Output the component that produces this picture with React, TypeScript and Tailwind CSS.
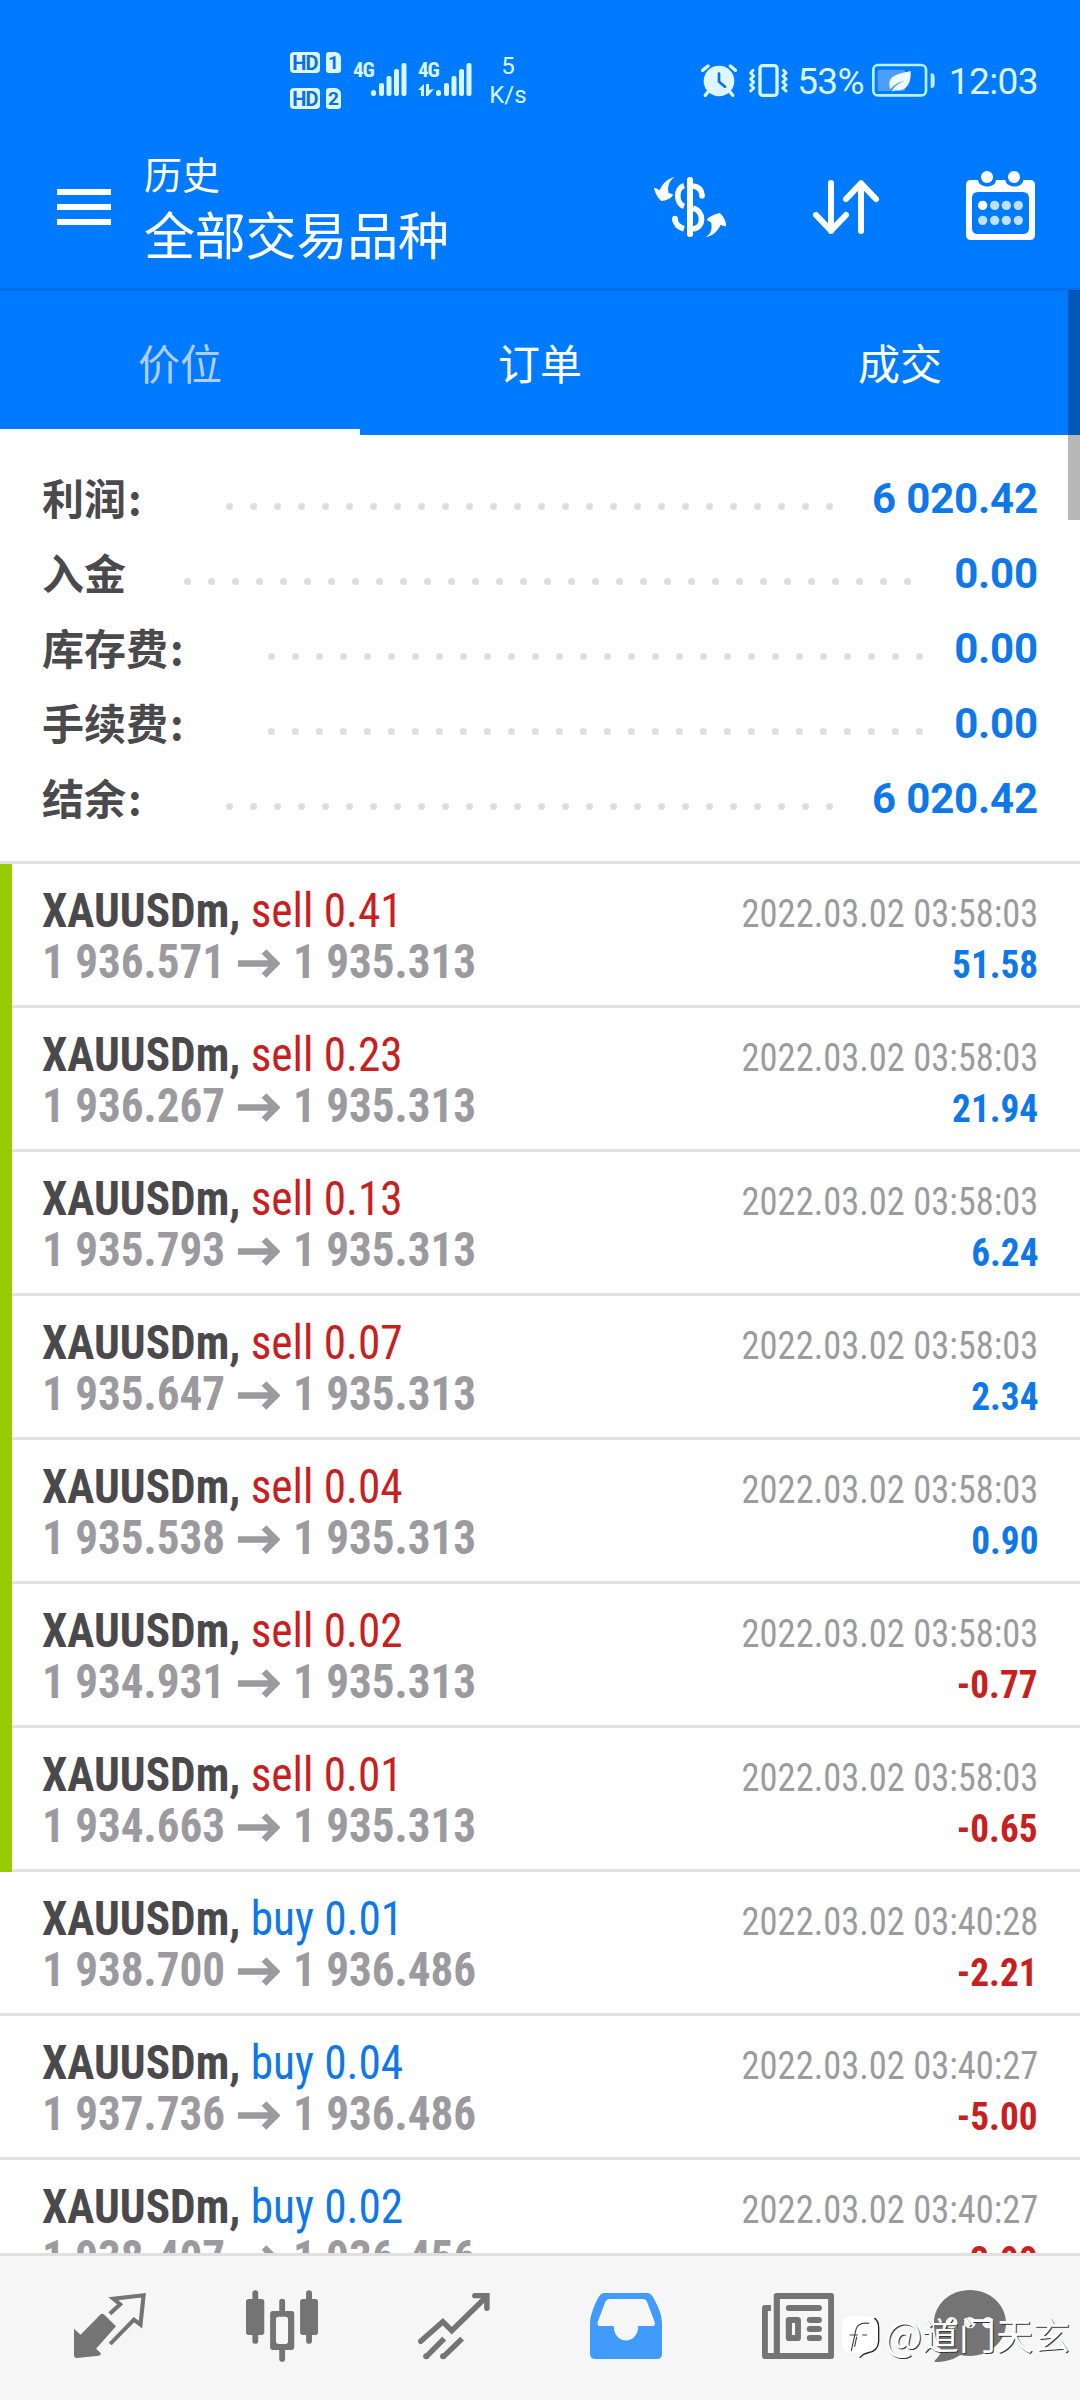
import type { ReactNode } from 'react';
import clsx from 'clsx';

const summary = [
  { label: '利润', colon: true, value: '6 020.42', dots: 26 },
  { label: '入金', colon: false, value: '0.00', dots: 31 },
  { label: '库存费', colon: true, value: '0.00', dots: 28 },
  { label: '手续费', colon: true, value: '0.00', dots: 28 },
  { label: '结余', colon: true, value: '6 020.42', dots: 26 },
];

const deals = [
  { side: 'sell', volume: '0.41', open: '1 936.571', close: '1 935.313', time: '2022.03.02 03:58:03', profit: '51.58', today: true },
  { side: 'sell', volume: '0.23', open: '1 936.267', close: '1 935.313', time: '2022.03.02 03:58:03', profit: '21.94', today: true },
  { side: 'sell', volume: '0.13', open: '1 935.793', close: '1 935.313', time: '2022.03.02 03:58:03', profit: '6.24', today: true },
  { side: 'sell', volume: '0.07', open: '1 935.647', close: '1 935.313', time: '2022.03.02 03:58:03', profit: '2.34', today: true },
  { side: 'sell', volume: '0.04', open: '1 935.538', close: '1 935.313', time: '2022.03.02 03:58:03', profit: '0.90', today: true },
  { side: 'sell', volume: '0.02', open: '1 934.931', close: '1 935.313', time: '2022.03.02 03:58:03', profit: '-0.77', today: true },
  { side: 'sell', volume: '0.01', open: '1 934.663', close: '1 935.313', time: '2022.03.02 03:58:03', profit: '-0.65', today: true },
  { side: 'buy', volume: '0.01', open: '1 938.700', close: '1 936.486', time: '2022.03.02 03:40:28', profit: '-2.21', today: false },
  { side: 'buy', volume: '0.04', open: '1 937.736', close: '1 936.486', time: '2022.03.02 03:40:27', profit: '-5.00', today: false },
  { side: 'buy', volume: '0.02', open: '1 938.407', close: '1 936.456', time: '2022.03.02 03:40:27', profit: '-3.90', today: false },
];

function HdBadge({ sim }: { sim: string }) {
  return (
    <div className="flex gap-[6px] h-[21px] font-bold text-[#0a6fe0] leading-[22px]">
      <span className="w-[30px] rounded-[4px] bg-[#def6ff] text-center text-[20px] tracking-[-0.8px]">HD</span>
      <span className="w-[15px] rounded-[3px] rounded-tr-[6px] bg-[#def6ff] text-center text-[19px]">{sim}</span>
    </div>
  );
}

function Signal({ data }: { data?: boolean }) {
  return (
    <div className="flex h-[36px] font-stretch-condensed">
      <span className="w-[18px] -mt-[5px] text-[21px] leading-[26px] font-bold tracking-[-1px]">4G</span>
      <svg className="w-[54px] h-[36px] -ml-[18px]" viewBox="0 0 54 36" fill="#d8f6ff">
        <rect x="18" y="28" width="5" height="6" rx="2.5" />
        <rect x="26" y="21" width="5" height="13" rx="2" />
        <rect x="33.500" y="14" width="5" height="20" rx="2" />
        <rect x="41" y="7" width="5" height="27" rx="2" />
        <rect x="48.500" y="1" width="5" height="33" rx="2" />
        {data && <path d="M0 28l6-6v12H3v-6H0zM8 22h3v6l5-1-6 7H8z" />}
      </svg>
    </div>
  );
}

function StatusBar() {
  return (
    <div className="flex items-center h-[144px] pt-[16px] pl-[290px] pr-[42px] text-[#d8f6ff]">
      <div className="flex flex-col gap-[15px]">
        <HdBadge sim="1" />
        <HdBadge sim="2" />
      </div>
      <div className="flex gap-[11px] ml-[12px]">
        <Signal />
        <Signal data />
      </div>
      <div className="w-[40px] ml-[16px] pt-[2px] text-center text-[24px] leading-[29px]">
        <div>5</div>
        <div>K/s</div>
      </div>
      <div className="flex items-center ml-auto text-[37px] leading-[40px]">
        <svg className="w-[37px] h-[34px]" viewBox="65 66 111 102" fill="#def6ff">
          <circle cx="119" cy="120" r="46" />
          <path d="M70 88l16-13M153 75l15 13M88 150l-10 13M150 150l10 13" stroke="#def6ff" strokeWidth="10" strokeLinecap="round" />
          <path d="M119 98v24l18 15" fill="none" stroke="#0a6fe0" strokeWidth="8" strokeLinecap="round" />
        </svg>
        <svg className="w-[41px] h-[34px] ml-[10px]" viewBox="205 66 123 102" fill="none" stroke="#d8f6ff" strokeLinecap="round" strokeLinejoin="round">
          <rect x="241" y="74" width="51" height="89" rx="8" strokeWidth="10" />
          <path d="M220 88l-7 8 9 9-9 9 9 9-9 9 9 9-9 9M312 88l7 8-9 9 9 9-9 9 9 9-9 9 9 9" strokeWidth="9" />
        </svg>
        <span className="ml-[8px] pt-[4px] tracking-[-0.7px]">53%</span>
        <svg className="w-[63px] h-[34px] ml-[8px]" viewBox="576 70 189 102">
          <rect x="580" y="76" width="158" height="91" rx="14" fill="none" stroke="#b8f2ff" strokeWidth="8" />
          <rect x="593" y="90" width="82" height="64" rx="4" fill="#4d9fff" />
          <path d="M752 101q12-3 12 12v20q0 13-12 12z" fill="#b8f2ff" />
          <path d="M692 94c2 34-10 62-46 58l-10 4q6-20 38-33-28 6-43 25c-14-42 28-46 61-54z" fill="#f0fbff" />
        </svg>
        <span className="ml-[14px] pt-[4px] tracking-[-0.6px]">12:03</span>
      </div>
    </div>
  );
}

function Header() {
  return (
    <div className="flex h-[147px] border-b-[3px] border-[#006ee6]">
      <div className="flex flex-col gap-[9px] w-[54px] ml-[57px] mt-[45px]">
        <span className="h-[6px] bg-white" />
        <span className="h-[6px] bg-white" />
        <span className="h-[6px] bg-white" />
      </div>
      <div className="ml-[33px] mt-[4px]">
        <div className="text-[38px] leading-[56px]">历史</div>
        <div className="text-[51px] leading-[67px] tracking-[-0.2px]">全部交易品种</div>
      </div>
      <div className="flex gap-[84px] ml-auto mt-[27px] pr-[42px]">
        <svg className="w-[72px] h-[72px]" viewBox="162 93 216 216" fill="white">
          <rect x="261" y="111" width="18" height="180" rx="8" />
          <path d="M252 137c-26 8-24 54 0 62M279 138c18 2 26 14 27 28M279 205c34 8 34 58 0 62M224 236c2 16 12 26 28 30" fill="none" stroke="white" strokeWidth="17" />
          <circle cx="306" cy="167" r="8.500" />
          <circle cx="225" cy="236" r="8.500" />
          <path d="M225 111c-16 8-24 28-19 48l12 4c2 6-6 10-12 14q-12 6-22 6-16-13-22-38c4-3 10 2 17 6 8-20 24-36 46-40z" />
          <path d="M317 291c14-6 21-22 16-44l-12-6c1-8 16-16 38-22 12 10 18 24 20 38-4 4-12-1-17-3-8 18-22 33-45 37z" />
        </svg>
        <svg className="w-[72px] h-[72px]" viewBox="630 93 216 216" fill="none" stroke="white" strokeWidth="18" strokeLinecap="round" strokeLinejoin="round">
          <path d="M693 129v144M648 225l45 47 45-47M783 273V130M738 177l45-47 45 47" />
        </svg>
        <svg className="w-[72px] h-[72px]" viewBox="1098 93 216 216" fill="white">
          <path fillRule="evenodd" d="M1112 120h22c2 26 54 26 54 0h28c2 26 52 26 54 0h20q15 0 15 15v150q0 15-15 15h-177q-15 0-15-15V135q0-15 14-15zm22 36q-18 0-18 18v90q0 18 18 18h134q19 0 19-18v-90q0-18-19-18z" />
          <circle cx="1161" cy="111" r="18" />
          <circle cx="1242" cy="111" r="18" />
          <circle cx="1148" cy="196" r="14" />
          <g fill="#bfe0ff">
            <circle cx="1184" cy="196" r="14" />
            <circle cx="1219" cy="196" r="14" />
            <circle cx="1255" cy="196" r="14" />
            <circle cx="1148" cy="241" r="14" />
            <circle cx="1184" cy="241" r="14" />
            <circle cx="1219" cy="241" r="14" />
            <circle cx="1255" cy="241" r="14" />
          </g>
        </svg>
      </div>
    </div>
  );
}

function Tabs() {
  return (
    <div className="grid grid-cols-3 h-[144px] text-center text-[42px] leading-[149px]">
      <div className="h-[144px] border-b-[6px] border-white text-[#b0cdf2]">价位</div>
      <div>订单</div>
      <div>成交</div>
    </div>
  );
}

function Summary() {
  return (
    <div className="pt-[26px] pb-[25px] px-[42px] border-b-[3px] border-[#e2e2e2]">
      {summary.map(row => (
        <div key={row.label} className="flex h-[75px] leading-[75px] text-[42px]">
          <div className="flex -mt-[2px] font-['Noto_Sans_CJK_SC',sans-serif] font-bold text-[#4a4a4d]">
            {row.label}
            {row.colon && <span className="w-[42px] pl-[2px]">:</span>}
          </div>
          <div className="flex gap-[17px] ml-[58px] pt-[42px]">
            {Array.from({ length: row.dots }, (_, i) => (
              <span key={i} className="size-[7px] rounded-full bg-[#dedede]" />
            ))}
          </div>
          <span className="ml-auto font-bold tracking-[-0.15px] text-[#0f78e8]">{row.value}</span>
        </div>
      ))}
    </div>
  );
}

function Deal({ deal }: { deal: (typeof deals)[number] }) {
  return (
    <div className="flex h-[144px] font-stretch-condensed">
      {deal.today && <div className="w-[12px] bg-[#99cc00]" />}
      <div
        className={clsx(
          'flex-1 pt-[21px] pr-[42px] border-b-[3px] border-[#e2e2e2] text-[48px] leading-[51px]',
          deal.today ? 'pl-[30px]' : 'pl-[42px]'
        )}
      >
        <div className="flex justify-between items-baseline h-[51px]">
          <div className="origin-left scale-x-[0.943]">
            <span className="font-bold text-[#4a4a4d]">XAUUSDm, </span>
            <span className={deal.side === 'sell' ? 'text-[#c8201f]' : 'text-[#0f78e8]'}>
              {deal.side} {deal.volume}
            </span>
          </div>
          <div className="origin-right scale-x-[0.935] text-[39px] leading-[39px] text-[#9b9b9d]">{deal.time}</div>
        </div>
        <div className="flex justify-between items-baseline h-[51px] font-bold">
          <div className="flex text-[#9b9b9f]">
            <span className="w-[196px] origin-left scale-x-94">{deal.open}</span>
            <svg className="w-[42px] h-[29px] mt-[13px] mr-[13px]" viewBox="0 0 42 29" fill="none" stroke="#9b9b9f" strokeWidth="6.500">
              <path d="M0 14.500h38M26 2.500l12 12-12 12" />
            </svg>
            <span className="origin-left scale-x-94">{deal.close}</span>
          </div>
          <div
            className={clsx(
              'origin-right scale-x-[0.955] text-[39px] leading-[39px]',
              deal.profit.startsWith('-') ? 'text-[#c8201f]' : 'text-[#0f78e8]'
            )}
          >
            {deal.profit}
          </div>
        </div>
      </div>
    </div>
  );
}

function NavIcon({ box, children }: { box: string; children: ReactNode }) {
  return (
    <svg className="w-[72px] h-[72px]" viewBox={box} preserveAspectRatio="none" fill="#747474">
      {children}
    </svg>
  );
}

function BottomNav() {
  return (
    <div className="flex justify-between h-[147px] pt-[34px] pl-[74px] pr-[74px] border-t-[3px] border-[#e0e0e0] bg-[#f6f6f6]">
      <NavIcon box="215 420 209 216">
        <path d="M215 536l19 18 57-60q6-6 12 0l34 35-58 67 14 14q1 6-6 7l-64 7q-8 0-8-9z" />
        <path d="M319 491l30-28-20-17 88-10-9 88-19-15-69 73" fill="none" stroke="#747474" strokeWidth="12" />
      </NavIcon>
      <NavIcon box="714 420 209 216">
        <rect x="714" y="447" width="53" height="108" rx="8" />
        <rect x="871" y="447" width="52" height="108" rx="8" />
        <path fillRule="evenodd" d="M792 483h54q8 0 8 8v101q0 8-8 8h-54q-8 0-8-8V491q0-8 8-8zm17 17q-8 0-8 8v66q0 8 8 8h20q7 0 7-8v-66q0-8-7-8z" />
        <path d="M741 429v144M897 429v144M819 455v32M819 596v31" stroke="#747474" strokeWidth="17" strokeLinecap="round" />
      </NavIcon>
      <NavIcon box="1214 420 209 216">
        <g fill="none" stroke="#747474" strokeWidth="16">
          <path d="M1222 574l64-59 26 27 100-101" strokeLinecap="round" />
          <path d="M1379 437h35v38" strokeLinecap="round" />
          <path d="M1238 620l52-54M1288 620l54-54" />
        </g>
        <circle cx="1238" cy="619" r="9" />
        <circle cx="1287" cy="619" r="9" />
      </NavIcon>
      <NavIcon box="145 420 209 216">
        <path
          fill="#419bfb"
          fillRule="evenodd"
          d="M186 429h126c10 0 17 13 23 26 12 24 19 44 19 68v88q0 16-16 16H161q-16 0-16-16v-88c0-24 8-45 18-68 6-13 13-26 23-26zm17 18q-10 0-14 10l-22 60q-2 11 7 11h40c0 58 71 58 71 0h42q8 0 6-11l-22-60q-4-10-12-10z"
        />
      </NavIcon>
      <NavIcon box="645 420 209 216">
        <path fillRule="evenodd" d="M687 429h159q8 0 8 8v182q0 8-8 8H655q-10 0-10-10V474q0-9 9-9h17v18h-9v126h17V437q0-8 8-8zm10 18v162h140V447z" />
        <path fillRule="evenodd" d="M724 501h24q10 0 10 10v52q0 10-10 10h-24q-10 0-10-10v-52q0-10 10-10zm8 18v36h9v-36z" />
        <path d="M723 474h87M784 510h26M784 537h26M784 564h26" stroke="#747474" strokeWidth="18" strokeLinecap="round" />
      </NavIcon>
      <NavIcon box="1145 420 209 216">
        <path d="M1249 420c58 0 105 44 105 99s-47 99-105 99q-16 0-28-3c-16 12-42 22-74 21-4-5 18-16 19-36-14-20-21-48-21-81 0-55 46-99 104-99z" />
        <g fill="#f6f6f6">
          <circle cx="1196" cy="518" r="17" />
          <circle cx="1249" cy="518" r="17" />
          <circle cx="1302" cy="518" r="17" />
        </g>
      </NavIcon>
    </div>
  );
}

function Watermark() {
  return (
    <div className="absolute right-[10px] bottom-[38px] flex items-center gap-[4px] text-white">
      <svg className="w-[39px] h-[44px]" viewBox="57 148 117 132" fill="none" strokeLinecap="round">
        <path d="M60 180q0-28 30-28h50q30 0 30 32v44q0 30-32 32l-22 16 2-14H90q-30-2-30-32z" fill="white" />
        <path d="M158 158q12 8 12 28v42q-2 30-34 34-12 2-22 13" stroke="#222" strokeWidth="4" />
        <path d="M140 173q-32-4-38 18l-14 64M84 208h22M122 208h12M104 214l-6 28" stroke="#444" strokeWidth="3.500" />
      </svg>
      <div className="flex items-center mb-[6px] font-['Noto_Sans_CJK_SC',sans-serif] text-[37px] leading-[44px] [text-shadow:1px_1px_0_#333]">
        <span className="text-[40px]">@</span>
        <span>道门天玄</span>
      </div>
    </div>
  );
}

export default function App() {
  return (
    <div className="relative flex flex-col w-[1080px] h-[2400px] overflow-hidden bg-white font-[Roboto,'Noto_Sans_CJK_SC',sans-serif]">
      <div className="shrink-0 bg-[#007aff] text-white">
        <StatusBar />
        <Header />
        <Tabs />
      </div>
      <div className="flex-1 min-h-0 overflow-hidden">
        <Summary />
        {deals.map(deal => (
          <Deal key={deal.open} deal={deal} />
        ))}
      </div>
      <BottomNav />
      {/* Scroll thumb */}
      <div className="absolute right-0 top-[290px] w-[12px] h-[230px] bg-black/28" />
      <Watermark />
    </div>
  );
}
